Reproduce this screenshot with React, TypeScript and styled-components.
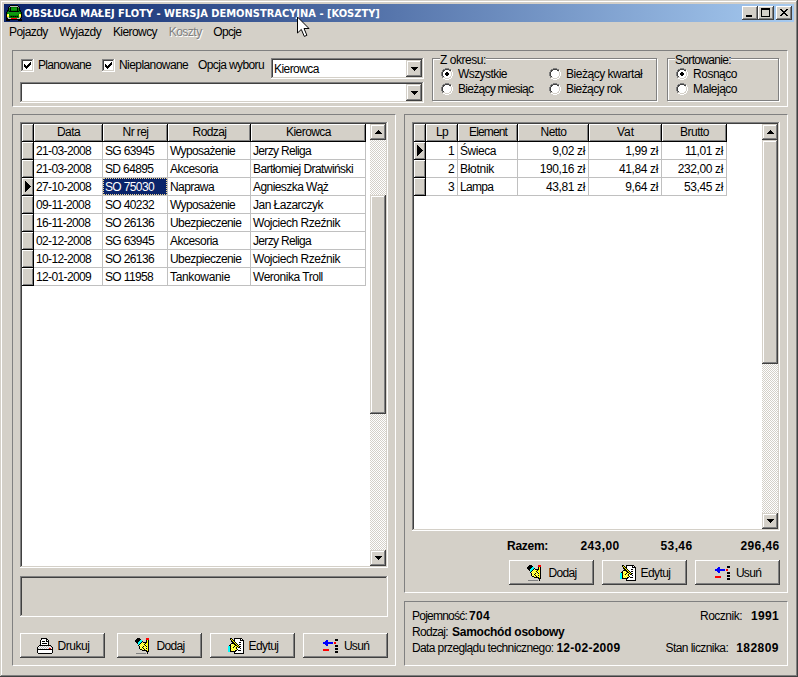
import React from "react";
import styled, { createGlobalStyle, css } from "styled-components";

const face = "#d4d0c8";
const shadow = "#808080";
const dark = "#404040";

const GlobalStyle = createGlobalStyle`
  * { box-sizing: border-box; }
  body {
    margin: 0;
    background: ${face};
    font: 12px/14px "Liberation Sans", Arial, sans-serif;
    color: #000;
    overflow: hidden;
  }
`;

/* ---------- text ---------- */

const tracking: Record<string, number> = {
  Wyjazdy: -0.46, Koszty: -0.5, Opcje: -0.67, Planowane: -0.71, "Opcja wyboru": -0.61,
  "Z okresu:": -0.45, "Bieżący miesiąc": -0.72, "Bieżący kwartał": -0.47, "Sortowanie:": -0.67,
  Rosnąco: -0.48, Malejąco: -0.5, Element: -0.86, Vat: -0.04, Brutto: -0.5, Lp: -0.67,
  Wyposażenie: -0.63, Akcesoria: -0.52, Tankowanie: -0.34, "Jerzy Religa": -0.67,
  "Jan Łazarczyk": -0.52, "Wojciech Rzeźnik": -0.47, "Weronika Troll": -0.48,
  "Świeca": -0.45, "Błotnik": -0.29, Lampa: -0.7, Drukuj: -0.45, Dodaj: -0.67, Edytuj: -0.6,
  "Usuń": -0.7, "Pojemność:": -0.77, "Rodzaj:": -0.67, "Data przeglądu technicznego:": -0.62,
  "Rocznik:": -0.5, "Razem:": -0.28, "243,00": 0.38, "53,46": 0.39, "296,46": 0.38,
  "704": 0.33, "Samochód osobowy": -0.26, "12-02-2009": 0.26, "1991": 0.33, "182809": 0.45,
};

const trackingFor = (text: string) => {
  if (text in tracking) return tracking[text];
  if (/zł$/.test(text)) return -0.38;
  if (/\d{3}/.test(text)) return -0.63;
  return -0.57;
};

const Glyphs = styled.span<{ $track: number; $bold?: boolean }>`
  letter-spacing: ${(p) => p.$track}px;
  font-weight: ${(p) => (p.$bold ? 700 : 400)};
  white-space: pre;
`;

const Text = ({ children, bold }: { children: string; bold?: boolean }) => (
  <Glyphs $track={trackingFor(children)} $bold={bold}>{children}</Glyphs>
);

/* ---------- bevels ---------- */

const raised = css`
  background: ${face};
  box-shadow: inset -1px -1px ${dark}, inset 1px 1px #fff, inset -2px -2px ${shadow};
`;

const scrollRaised = css`
  background: ${face};
  box-shadow: inset -1px -1px ${dark}, inset 1px 1px ${face}, inset -2px -2px ${shadow}, inset 2px 2px #fff;
`;

const sunken = css`
  padding: 2px;
  box-shadow: inset -1px -1px #fff, inset 1px 1px ${shadow}, inset -2px -2px ${face}, inset 2px 2px ${dark};
`;

const Panel = styled.section`
  border: 1px solid;
  border-color: ${shadow} #fff #fff ${shadow};
`;

/* ---------- pixel icons ---------- */

const palette: Record<string, string> = {
  k: "#000000", w: "#ffffff", g: "#008000", G: "#109a10", d: "#004800", y: "#ffff00", Y: "#ffff80",
  c: "#00ffff", r: "#ff0000", s: "#c0c0c0", S: "#808080", b: "#0000ff", o: "#808000",
};

const IconSvg = styled.svg`
  display: block;
  flex: none;
  shape-rendering: crispEdges;
`;

const PixelIcon = ({ rows }: { rows: string[] }) => (
  <IconSvg width={16} height={16} viewBox="0 0 16 16">
    {rows.flatMap((row, y) =>
      [...row].map((ch, x) =>
        palette[ch] ? <rect key={`${x}-${y}`} x={x} y={y} width={1} height={1} fill={palette[ch]} /> : null
      )
    )}
  </IconSvg>
);

const car = [
  "....kkkkkkkk....",
  "...kssssssssk...",
  "..kSkggggggkSk..",
  "..kgkGGGGGGkgk..",
  "..kgkGGGGGGkgk..",
  ".kkgkggggggkgkk.",
  ".kgkkkkkkkkkkgk.",
  "kgGGGGGGGGGGGGgk",
  "kgGGGGGGGGGGGGgk",
  "kyYgGGGGGGGGgYyk",
  "kYYggggggggggYYk",
  "kyygdkdkdkdkgyyk",
  "kSsggggggggggsSk",
  "kksssrrrrrrsssk.",
  "kkkkkkkkkkkkkkkk",
  "kkkk........kkkk",
];

const printer = [
  "....kkkkkk......",
  "....kwwwwkk.....",
  "...kwwwwwkwk....",
  "...kwkkkwkkk....",
  "...kwwwwwwwk....",
  "...kwkkkkkwk....",
  "...kwwwwwwwk....",
  "..kkkkkkkkkkkk..",
  ".kwswswswswswsk.",
  "kwswswswswswswsk",
  "kswswswswswsrrwk",
  "kkkkkkkkkkkkkkkk",
  "kwwwwwwwwwwwwwwk",
  "kwwwwwwwwwwwwwwk",
  "kwwwwwwwwwwwwwwk",
  ".kkkkkkkkkkkkkk.",
];

const addHand = [
  "..kkk......rrr..",
  ".kkkkk.....rrr..",
  "kkkkkcc....kyk..",
  "kkkkccck...kyk..",
  ".kkccckYkkkkyk..",
  "..kcckYyYykyyk..",
  "...ckYyYykYyyk..",
  "...kYyYyYykYyk..",
  "....kYyYkyYkyk..",
  "....kyYkyYyYyk..",
  "....kYyYkyYkyk..",
  ".....kkyYkyYyk..",
  ".......kkkkkyk..",
  "...........kkk..",
  "............k...",
  ".SSSSSSSSSS.k...",
];

const editPage = [
  "..kk..kkkkkkkk..",
  "..kyk.kwwwwwkwk.",
  "...kykkwwwwwkkkk",
  "...kkykwwwwwwwwk",
  "....kkykwwwkkwwk",
  "...kkkkykwwwwwwk",
  "..kYYykkykwkkwwk",
  ".kkYyYykkykwwwwk",
  "cckyYykYykykkwwk",
  "cckYykYykYkkwwwk",
  "cckyYyYykwwwkwwk",
  "cckYyYyYykwwwwwk",
  "cckyYyYkkwkkkwwk",
  "cckkkkkkwwwwwwwk",
  "......kwwwwwwwwk",
  "......kkkkkkkkkk",
];

const removeRow = [
  "................",
  "............kkk.",
  "...bb.......kkk.",
  "..bbb...........",
  "bbbbbbbbbb.rr...",
  "bbbbbbbbbb.rr...",
  "..bbb...........",
  "...bb.......kkk.",
  "............kkk.",
  "................",
  "............kkk.",
  "rrrrrr......kkk.",
  "rrrrrr..........",
  "............kkk.",
  "............kkk.",
  "................",
];

/* ---------- window frame ---------- */

const Window = styled.div`
  width: 798px;
  height: 677px;
  padding: 4px;
  background: ${face};
  box-shadow: inset -1px -1px ${dark}, inset 1px 1px ${face}, inset -2px -2px ${shadow}, inset 2px 2px #fff;
`;

const TitleBar = styled.header`
  display: flex;
  align-items: center;
  height: 18px;
  padding: 0 2px;
  gap: 2px;
  background: linear-gradient(to right, #0a246a, #a6caf0);
`;

const Title = styled.h1`
  flex: 1;
  margin: 0;
  padding-top: 1px;
  color: #fff;
  font: bold 11px/16px "DejaVu Sans Condensed", "DejaVu Sans", sans-serif;
  font-stretch: condensed;
  white-space: pre;
`;

const WindowButtons = styled.div`
  display: flex;
`;

const WindowButton = styled.button<{ $apart?: boolean }>`
  display: flex;
  width: 16px;
  height: 14px;
  padding: 0;
  margin-left: ${(p) => (p.$apart ? 2 : 0)}px;
  border: 0;
  ${raised}
`;

const MenuBar = styled.nav`
  display: flex;
  gap: 11.6px;
  height: 28px;
  padding: 3px 5px 0;
`;

const MenuItem = styled.span<{ $disabled?: boolean }>`
  ${(p) => p.$disabled && css`color: ${shadow}; text-shadow: 1px 1px #fff;`}
`;

/* ---------- filters ---------- */

const Filters = styled(Panel)`
  display: flex;
  height: 57px;
  margin: 0 6px 7px 8px;
  padding: 7px;
`;

const Selection = styled.div`
  display: grid;
  grid-template-rows: 21px 21px;
  row-gap: 3px;
  width: 404px;
`;

const SelectionTop = styled.div`
  display: grid;
  grid-template-columns: 81px 97px 73px 153px;
`;

const CheckLabel = styled.label`
  display: flex;
  gap: 4px;
  padding: 1px 0 0 1px;
  height: 14px;
  line-height: 13px;
`;

const CheckBox = styled.span`
  width: 13px;
  height: 13px;
  background: #fff;
  ${sunken}
`;

const Caption = styled.span`
  line-height: 15px;
`;

const Combo = styled.div`
  display: flex;
  justify-content: space-between;
  height: 21px;
  background: #fff;
  line-height: 18px;
  ${sunken}
`;

const ComboValue = styled.span`
  padding-left: 1px;
`;

const ArrowButton = styled.span`
  display: flex;
  align-items: center;
  justify-content: center;
  flex: none;
  width: 16px;
  height: 17px;
  ${scrollRaised}
`;

const Group = styled.fieldset<{ $width: number; $columns: string }>`
  position: relative;
  display: grid;
  grid-template-columns: ${(p) => p.$columns};
  grid-auto-rows: 15px;
  align-content: start;
  width: ${(p) => p.$width}px;
  height: 43px;
  margin: 0 0 0 8px;
  padding: 9px 0 0 8px;
  border: 1px solid ${shadow};
  box-shadow: 1px 1px #fff, inset 1px 1px #fff;
  & + & { margin-left: 10px; }
`;

const GroupTitle = styled.span`
  position: absolute;
  top: -6px;
  left: 7px;
  height: 13px;
  background: ${face};
`;

const RadioLabel = styled.label`
  display: flex;
  gap: 5px;
  line-height: 13px;
`;

const Radio = ({ on }: { on?: boolean }) => (
  <IconSvg width={12} height={12} viewBox="0 0 12 12">
    <rect x={2} y={1} width={8} height={10} fill="#fff" />
    <rect x={1} y={2} width={10} height={8} fill="#fff" />
    <path fill={shadow} d="M4 0h4v1H4zM2 1h2v1H2zM8 1h2v1H8zM1 2h1v2H1zM0 4h1v4H0zM1 8h1v2H1z" />
    <path fill={dark} d="M4 1h4v1H4zM2 2h2v1H2zM8 2h2v1H8zM2 3h1v1H2zM1 4h1v4H1zM2 8h1v1H2z" />
    <path fill={face} d="M9 3h1v1H9zM10 4h1v4h-1zM9 8h1v1H9zM8 9h2v1H8zM2 9h2v1H2zM4 10h4v1H4z" />
    <path fill="#fff" d="M10 2h1v2h-1zM11 4h1v4h-1zM10 8h1v2h-1zM8 10h2v1H8zM2 10h2v1H2zM4 11h4v1H4z" />
    {on && <path d="M5 4h2v1h1v2H7v1H5V7H4V5h1z" />}
  </IconSvg>
);

/* ---------- data grids ---------- */

const Columns = styled.main`
  display: grid;
  grid-template-columns: 384px 384px;
  column-gap: 8px;
  margin-left: 8px;
  height: 552px;
`;

const SidePanel = styled(Panel)<{ $height: number }>`
  height: ${(p) => p.$height}px;
  padding: 7px;
`;

const RightColumn = styled.div`
  display: flex;
  flex-direction: column;
  gap: 8px;
`;

const GridFrame = styled.div<{ $height: number }>`
  display: flex;
  justify-content: space-between;
  height: ${(p) => p.$height}px;
  background: #fff;
  ${sunken}
`;

const Table = styled.div<{ $columns: string }>`
  display: grid;
  grid-template-columns: ${(p) => p.$columns};
  grid-auto-rows: 18px;
  align-content: start;
`;

const FixedCell = styled.div`
  display: flex;
  align-items: center;
  justify-content: center;
  line-height: 17px;
  padding-left: 1px;
  background: ${face};
  border: solid #000;
  border-width: 0 1px 1px 0;
  box-shadow: inset 1px 1px #fff, inset -1px -1px ${shadow};
`;

const Cell = styled.div<{ $right?: boolean }>`
  padding: 0 3px 0 2px;
  line-height: 18px;
  text-align: ${(p) => (p.$right ? "right" : "left")};
  border: solid #c0c0c0;
  border-width: 0 1px 1px 0;
  overflow: hidden;
`;

const FocusedValue = styled.div`
  height: 17px;
  margin: 0 -3px 0 -2px;
  padding-left: 1px;
  line-height: 16px;
  background: #0a246a;
  color: #fff;
  border: 1px dotted #f5db95;
`;

const ScrollBar = styled.div`
  display: flex;
  flex-direction: column;
  width: 16px;
  background: repeating-conic-gradient(#fff 0 25%, ${face} 0 50%) 0 0 / 2px 2px;
`;

const ScrollArrow = styled(ArrowButton)`
  height: 16px;
`;

const ScrollThumb = styled.span<{ $offset: number; $size: number }>`
  height: ${(p) => p.$size}px;
  margin: ${(p) => p.$offset}px 0 auto;
  ${scrollRaised}
`;

const Arrow = ({ up }: { up?: boolean }) => (
  <IconSvg width={7} height={4} viewBox="0 0 7 4">
    <path d={up ? "M3 0h1v1h1v1h1v1h1v1H0V3h1V2h1V1h1z" : "M0 0h7v1H6v1H5v1H4v1H3V3H2V2H1V1H0z"} />
  </IconSvg>
);

const RowMarker = () => (
  <IconSvg width={6} height={11} viewBox="0 0 6 11">
    <path d="M0 0h1v1h1v1h1v1h1v1h1v1h1v1H5v1H4v1H3v1H2v1H1v1H0z" />
  </IconSvg>
);

type GridProps = {
  height: number;
  columns: string;
  headers: string[];
  rows: string[][];
  current: number;
  selectedColumn?: number;
  rightAligned?: number[];
  thumb: [number, number];
};

const DataGrid = ({ height, columns, headers, rows, current, selectedColumn, rightAligned = [], thumb }: GridProps) => (
  <GridFrame $height={height}>
    <Table $columns={columns}>
      <FixedCell />
      {headers.map((h) => <FixedCell key={h}><Text>{h}</Text></FixedCell>)}
      {rows.map((row, r) => (
        <React.Fragment key={r}>
          <FixedCell>{r === current && <RowMarker />}</FixedCell>
          {row.map((value, c) => (
            <Cell key={c} $right={rightAligned.includes(c)}>
              {r === current && c === selectedColumn
                ? <FocusedValue><Text>{value}</Text></FocusedValue>
                : <Text>{value}</Text>}
            </Cell>
          ))}
        </React.Fragment>
      ))}
    </Table>
    <ScrollBar>
      <ScrollArrow><Arrow up /></ScrollArrow>
      <ScrollThumb $offset={thumb[0]} $size={thumb[1]} />
      <ScrollArrow><Arrow /></ScrollArrow>
    </ScrollBar>
  </GridFrame>
);

/* ---------- buttons and footers ---------- */

const Memo = styled.div`
  height: 41px;
  margin: 8px 0 16px;
  ${sunken}
`;

const ButtonRow = styled.div`
  display: flex;
  justify-content: flex-end;
  gap: 8px;
`;

const PushButton = styled.button<{ $first?: boolean }>`
  display: flex;
  align-items: center;
  justify-content: center;
  gap: 5px;
  width: 85px;
  height: 25px;
  padding: 0 0 0 1px;
  margin-right: ${(p) => (p.$first ? 4 : 0)}px;
  border: 0;
  font: inherit;
  line-height: 24px;
  color: #000;
  ${raised}
`;

const Action = ({ icon, label, first }: { icon: string[]; label: string; first?: boolean }) => (
  <PushButton $first={first}>
    <PixelIcon rows={icon} />
    <Text>{label}</Text>
  </PushButton>
);

const EditActions = () => (
  <>
    <Action icon={addHand} label="Dodaj" />
    <Action icon={editPage} label="Edytuj" />
    <Action icon={removeRow} label="Usuń" />
  </>
);

const Totals = styled.div`
  display: grid;
  grid-template-columns: 136px 71.5px 73px 87px;
  height: 29px;
  padding-top: 8px;
  text-align: right;
`;

const Details = styled(Panel)`
  height: 65px;
  padding: 6px 8px 0 7px;
  line-height: 16px;
`;

const DetailRow = styled.div`
  display: flex;
  height: 16px;
`;

const DetailValue = styled.span<{ $gap: number }>`
  margin-left: ${(p) => p.$gap}px;
`;

const Spacer = styled.span`
  flex: 1;
`;

const Pointer = styled.svg`
  position: absolute;
  left: 297px;
  top: 16px;
`;

const costs = [
  ["21-03-2008", "SG 63945", "Wyposażenie", "Jerzy Religa"],
  ["21-03-2008", "SD 64895", "Akcesoria", "Bartłomiej Dratwiński"],
  ["27-10-2008", "SO 75030", "Naprawa", "Agnieszka Wąż"],
  ["09-11-2008", "SO 40232", "Wyposażenie", "Jan Łazarczyk"],
  ["16-11-2008", "SO 26136", "Ubezpieczenie", "Wojciech Rzeźnik"],
  ["02-12-2008", "SG 63945", "Akcesoria", "Jerzy Religa"],
  ["10-12-2008", "SO 26136", "Ubezpieczenie", "Wojciech Rzeźnik"],
  ["12-01-2009", "SO 11958", "Tankowanie", "Weronika Troll"],
];

const elements = [
  ["1", "Świeca", "9,02 zł", "1,99 zł", "11,01 zł"],
  ["2", "Błotnik", "190,16 zł", "41,84 zł", "232,00 zł"],
  ["3", "Lampa", "43,81 zł", "9,64 zł", "53,45 zł"],
];

const Check = ({ label }: { label: string }) => (
  <CheckLabel>
    <CheckBox>
      <IconSvg width={9} height={9} viewBox="0 0 9 9">
        <path d="M1 3h1v1h1v1h1V4h1V3h1V2h1V1h1v3H7v1H6v1H5v1H4v1H3V7H2V6H1z" />
      </IconSvg>
    </CheckBox>
    <Text>{label}</Text>
  </CheckLabel>
);

const Choice = ({ label, on }: { label: string; on?: boolean }) => (
  <RadioLabel><Radio on={on} /><Text>{label}</Text></RadioLabel>
);

export default function App() {
  return (
    <Window>
      <GlobalStyle />
      <TitleBar>
        <PixelIcon rows={car} />
        <Title>OBSŁUGA MAŁEJ FLOTY - WERSJA DEMONSTRACYJNA - [KOSZTY]</Title>
        <WindowButtons>
          <WindowButton aria-label="Minimalizuj">
            <IconSvg width={16} height={14}><path d="M4 9h6v2H4z" /></IconSvg>
          </WindowButton>
          <WindowButton aria-label="Maksymalizuj">
            <IconSvg width={16} height={14}><path fillRule="evenodd" d="M3 2h9v9H3zM4 4v6h7V4z" /></IconSvg>
          </WindowButton>
          <WindowButton $apart aria-label="Zamknij">
            <IconSvg width={16} height={14}>
              <path d="M4 3h2v1h1v1h2V4h1V3h2v1h-1v1h-1v1H9v1h1v1h1v1h1v1h-2V9H9V8H7v1H6v1H4V9h1V8h1V7h1V6H6V5H5V4H4z" />
            </IconSvg>
          </WindowButton>
        </WindowButtons>
      </TitleBar>
      <MenuBar>
        <MenuItem><Text>Pojazdy</Text></MenuItem>
        <MenuItem><Text>Wyjazdy</Text></MenuItem>
        <MenuItem><Text>Kierowcy</Text></MenuItem>
        <MenuItem $disabled><Text>Koszty</Text></MenuItem>
        <MenuItem><Text>Opcje</Text></MenuItem>
      </MenuBar>

      <Filters>
        <Selection>
          <SelectionTop>
            <Check label="Planowane" />
            <Check label="Nieplanowane" />
            <Caption><Text>Opcja wyboru</Text></Caption>
            <Combo>
              <ComboValue><Text>Kierowca</Text></ComboValue>
              <ArrowButton><Arrow /></ArrowButton>
            </Combo>
          </SelectionTop>
          <Combo>
            <ComboValue />
            <ArrowButton><Arrow /></ArrowButton>
          </Combo>
        </Selection>
        <Group $width={225} $columns="108px 1fr">
          <GroupTitle><Text>Z okresu:</Text></GroupTitle>
          <Choice label="Wszystkie" on />
          <Choice label="Bieżący kwartał" />
          <Choice label="Bieżący miesiąc" />
          <Choice label="Bieżący rok" />
        </Group>
        <Group $width={112} $columns="1fr">
          <GroupTitle><Text>Sortowanie:</Text></GroupTitle>
          <Choice label="Rosnąco" on />
          <Choice label="Malejąco" />
        </Group>
      </Filters>

      <Columns>
        <SidePanel $height={552}>
          <DataGrid
            height={446}
            columns="12px 69px 65px 83px 115px"
            headers={["Data", "Nr rej", "Rodzaj", "Kierowca"]}
            rows={costs}
            current={2}
            selectedColumn={1}
            thumb={[55, 219]}
          />
          <Memo />
          <ButtonRow>
            <Action icon={printer} label="Drukuj" first />
            <EditActions />
          </ButtonRow>
        </SidePanel>
        <RightColumn>
          <SidePanel $height={479}>
            <DataGrid
              height={409}
              columns="12px 32px 60px 71px 73px 65px"
              headers={["Lp", "Element", "Netto", "Vat", "Brutto"]}
              rows={elements}
              current={0}
              rightAligned={[0, 2, 3, 4]}
              thumb={[0, 224]}
            />
            <Totals>
              <Text bold>Razem:</Text>
              <Text bold>243,00</Text>
              <Text bold>53,46</Text>
              <Text bold>296,46</Text>
            </Totals>
            <ButtonRow><EditActions /></ButtonRow>
          </SidePanel>
          <Details>
            <DetailRow>
              <Text>Pojemność:</Text>
              <DetailValue $gap={2}><Text bold>704</Text></DetailValue>
              <Spacer />
              <Text>Rocznik:</Text>
              <DetailValue $gap={9}><Text bold>1991</Text></DetailValue>
            </DetailRow>
            <DetailRow>
              <Text>Rodzaj:</Text>
              <DetailValue $gap={4}><Text bold>Samochód osobowy</Text></DetailValue>
            </DetailRow>
            <DetailRow>
              <Text>Data przeglądu technicznego:</Text>
              <DetailValue $gap={3}><Text bold>12-02-2009</Text></DetailValue>
              <Spacer />
              <Text>Stan licznika:</Text>
              <DetailValue $gap={8}><Text bold>182809</Text></DetailValue>
            </DetailRow>
          </Details>
        </RightColumn>
      </Columns>

      <Pointer width={13} height={22} viewBox="0 0 13 22">
        <path d="M.5 1v16l3.8-3.6 3 7 2.6-1.1-2.9-6.8h5z" fill="#fff" stroke="#000" />
      </Pointer>
    </Window>
  );
}
